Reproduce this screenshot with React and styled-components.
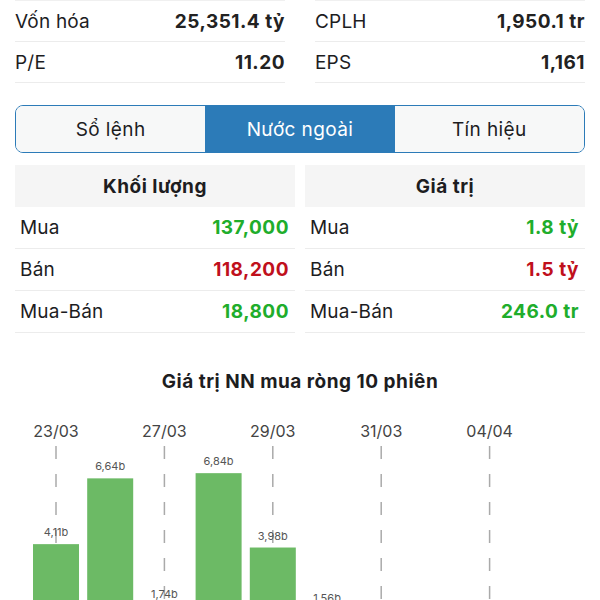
import React from "react";
import styled, { createGlobalStyle } from "styled-components";

const Global = createGlobalStyle`
  html, body { margin: 0; padding: 0; background: #fff; }
  body { font-family: Inter, "Noto Sans", "Liberation Sans", sans-serif; color: #1d1d1f; }
`;

const Page = styled.div`
  padding: 0 15px;
  width: 570px;
`;

const InfoGrid = styled.div`
  display: grid;
  grid-template-columns: 1fr 1fr;
  column-gap: 30px;
`;

const InfoCol = styled.div`
  border-top: 1px solid #f0f0f0;
`;

const InfoRow = styled.div`
  display: flex;
  justify-content: space-between;
  align-items: center;
  height: 40px;
  border-bottom: 1px solid #ececec;
  font-size: 19px;
`;

const Label = styled.span`
  font-weight: 400;
  color: #1d1d1f;
  letter-spacing: 0.2px;
`;

const Value = styled.span`
  font-weight: 700;
  letter-spacing: 0.5px;
  color: ${(p) => p.color || "#222"};
`;

const Tabs = styled.div`
  display: grid;
  grid-template-columns: repeat(3, 1fr);
  margin-top: 22px;
  height: 48px;
  border: 1.5px solid #2c7bb8;
  border-radius: 8px;
  overflow: hidden;
  box-sizing: border-box;
`;

const Tab = styled.div`
  display: flex;
  align-items: center;
  justify-content: center;
  font-size: 19px;
  letter-spacing: 0.4px;
  background: ${(p) => (p.$active ? "#2c7bb8" : "#f7f8f8")};
  color: ${(p) => (p.$active ? "#fff" : "#1d1d1f")};
`;

const Tables = styled.div`
  display: grid;
  grid-template-columns: 1fr 1fr;
  column-gap: 10px;
  margin-top: 12px;
`;

const Header = styled.div`
  height: 42px;
  background: #f5f5f5;
  display: flex;
  align-items: center;
  justify-content: center;
  font-size: 19px;
  font-weight: 700;
  letter-spacing: 0.5px;
  color: #1d1d1f;
`;

const TRow = styled.div`
  display: flex;
  justify-content: space-between;
  align-items: center;
  height: 41px;
  padding: 0 6px 0 5px;
  border-bottom: 1px solid #ececec;
  font-size: 19px;
`;

const ChartTitle = styled.div`
  margin-top: 37px;
  text-align: center;
  font-size: 19px;
  font-weight: 700;
  letter-spacing: 0.5px;
  color: #1d1d1f;
`;

const ChartWrap = styled.div`
  margin: 8px -15px 0;
  height: 250px;
`;

const GREEN = "#20ad2b";
const RED = "#c0101c";

const bars = [4.11, 6.64, 1.74, 6.84, 3.98, 1.56, 0.6, 0.5, 0.4, 0.3];
const dates = ["23/03", "27/03", "29/03", "31/03", "04/04"];

function Chart() {
  const step = 54.2;
  const x0 = 56;
  const base = 250;
  const k = 26;
  const dateIdx = [0, 2, 4, 6, 8];
  return (
    <svg width="600" height="250" viewBox="0 0 600 250">
      {dateIdx.map((i, j) => {
        const x = x0 + i * step;
        return (
          <g key={j}>
            <text x={x} y={36} textAnchor="middle" fontSize="16" fill="#444" fontFamily="Inter, sans-serif">
              {dates[j]}
            </text>
            <line x1={x} x2={x} y1={45} y2={250} stroke="#aaa" strokeWidth="1.5" strokeDasharray="13 15" />
          </g>
        );
      })}
      {bars.map((v, i) => {
        const cx = x0 + i * step;
        const h = v * k;
        const top = base - h;
        return (
          <g key={i}>
            <rect x={cx - 23} y={top} width={46} height={h} fill="#6cba65" />
            <text x={cx} y={top - 8} textAnchor="middle" fontSize="11" fill="#555" fontFamily="Inter, sans-serif">
              {v.toFixed(2).replace(".", ",")}b
            </text>
          </g>
        );
      })}
    </svg>
  );
}

export default function App() {
  return (
    <>
      <Global />
      <Page>
        <InfoGrid>
          <InfoCol>
            <InfoRow><Label>Vốn hóa</Label><Value>25,351.4 tỷ</Value></InfoRow>
            <InfoRow><Label>P/E</Label><Value>11.20</Value></InfoRow>
          </InfoCol>
          <InfoCol>
            <InfoRow><Label>CPLH</Label><Value>1,950.1 tr</Value></InfoRow>
            <InfoRow><Label>EPS</Label><Value>1,161</Value></InfoRow>
          </InfoCol>
        </InfoGrid>
        <Tabs>
          <Tab>Sổ lệnh</Tab>
          <Tab $active>Nước ngoài</Tab>
          <Tab>Tín hiệu</Tab>
        </Tabs>
        <Tables>
          <div>
            <Header>Khối lượng</Header>
            <TRow><Label>Mua</Label><Value color={GREEN}>137,000</Value></TRow>
            <TRow><Label>Bán</Label><Value color={RED}>118,200</Value></TRow>
            <TRow><Label>Mua-Bán</Label><Value color={GREEN}>18,800</Value></TRow>
          </div>
          <div>
            <Header>Giá trị</Header>
            <TRow><Label>Mua</Label><Value color={GREEN}>1.8 tỷ</Value></TRow>
            <TRow><Label>Bán</Label><Value color={RED}>1.5 tỷ</Value></TRow>
            <TRow><Label>Mua-Bán</Label><Value color={GREEN}>246.0 tr</Value></TRow>
          </div>
        </Tables>
        <ChartTitle>Giá trị NN mua ròng 10 phiên</ChartTitle>
        <ChartWrap>
          <Chart />
        </ChartWrap>
      </Page>
    </>
  );
}
